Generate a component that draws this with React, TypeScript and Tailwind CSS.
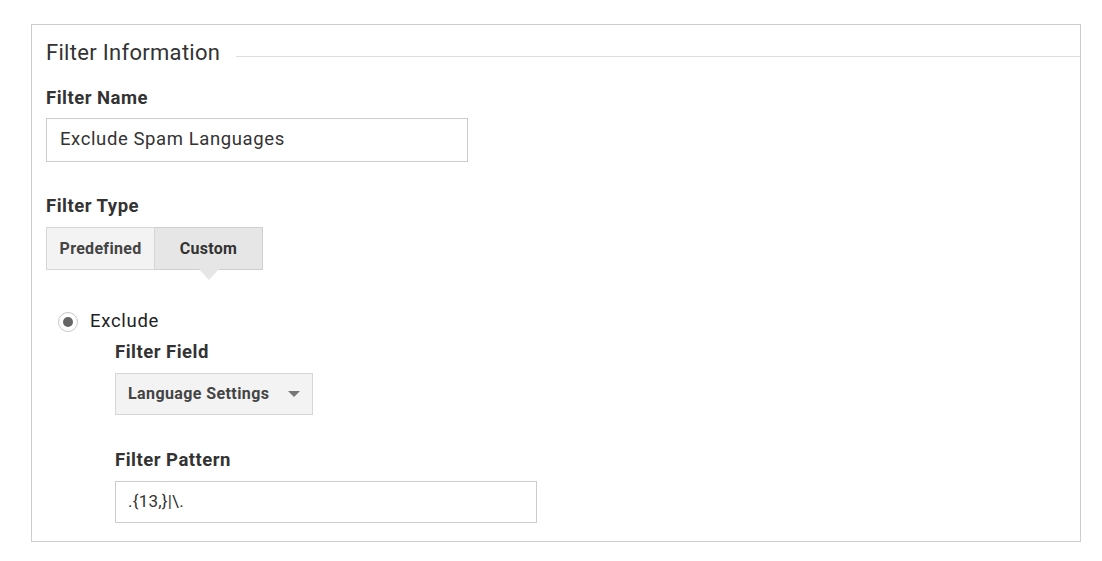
import React from 'react';

const font = { fontFamily: 'Roboto, "Liberation Sans", sans-serif' };

export default function App() {
  return (
    <div className="w-[1102px] h-[561px] bg-white pt-[24px] pl-[31px]" style={font}>
      <div className="w-[1050px] h-[518px] border border-[#cccccc] pt-[14px] pl-[14px]">
        <div className="flex items-center h-[28px]">
          <span className="text-[22px] leading-[28px] tracking-[0.3px] text-[#333333]">Filter Information</span>
          <div className="flex-1 ml-[16px] mt-[6px] h-px bg-[#dddddd]" />
        </div>

        <div className="mt-[19px] text-[18.5px] leading-[24px] tracking-[0.5px] font-bold text-[#333333]">Filter Name</div>
        <div className="mt-[8px] w-[422px] h-[44px] border border-[#cccccc] flex items-center px-[13px] text-[18.5px] tracking-[0.6px] text-[#333333]">
          Exclude Spam Languages
        </div>

        <div className="mt-[32px] text-[18.5px] leading-[24px] tracking-[0.5px] font-bold text-[#333333]">Filter Type</div>
        <div className="mt-[9px] flex">
          <div className="w-[109px] h-[43px] border border-[#d6d6d6] bg-[#f3f3f3] flex items-center justify-center text-[16px] tracking-[0.3px] font-bold text-[#444444]">
            Predefined
          </div>
          <div className="relative w-[108px] h-[43px] border border-l-0 border-[#cfcfcf] bg-[#e6e6e6] flex items-center justify-center text-[16px] tracking-[0.3px] font-bold text-[#333333]">
            Custom
            <div className="absolute left-1/2 -translate-x-1/2 top-full w-0 h-0 border-l-[10px] border-r-[10px] border-t-[11px] border-l-transparent border-r-transparent border-t-[#e6e6e6]" />
          </div>
        </div>

        <div className="mt-[40px] ml-[12px] flex items-center h-[24px]">
          <div className="w-[20px] h-[20px] rounded-full border border-[#c8c8c8] flex items-center justify-center">
            <div className="w-[10px] h-[10px] rounded-full bg-[#666666]" />
          </div>
          <span className="ml-[12px] text-[18.5px] tracking-[0.7px] text-[#222222]">Exclude</span>
        </div>

        <div className="ml-[69px]">
          <div className="mt-[6px] text-[18.5px] leading-[24px] tracking-[0.5px] font-bold text-[#333333]">Filter Field</div>
          <div className="mt-[9px] w-[198px] h-[42px] border border-[#d6d6d6] bg-[#f3f3f3] flex items-center pl-[12px] pr-[12px] text-[16px] tracking-[0.4px] font-bold text-[#444444]">
            <span>Language Settings</span>
            <div className="ml-auto w-0 h-0 border-l-[6px] border-r-[6px] border-t-[6px] border-l-transparent border-r-transparent border-t-[#777777]" />
          </div>

          <div className="mt-[33px] text-[18.5px] leading-[24px] tracking-[0.5px] font-bold text-[#333333]">Filter Pattern</div>
          <div className="mt-[9px] w-[422px] h-[42px] border border-[#cccccc] flex items-center px-[12px] text-[17px] tracking-[0.2px] text-[#333333]">
            .{'{13,}'}|\.
          </div>
        </div>
      </div>
    </div>
  );
}
